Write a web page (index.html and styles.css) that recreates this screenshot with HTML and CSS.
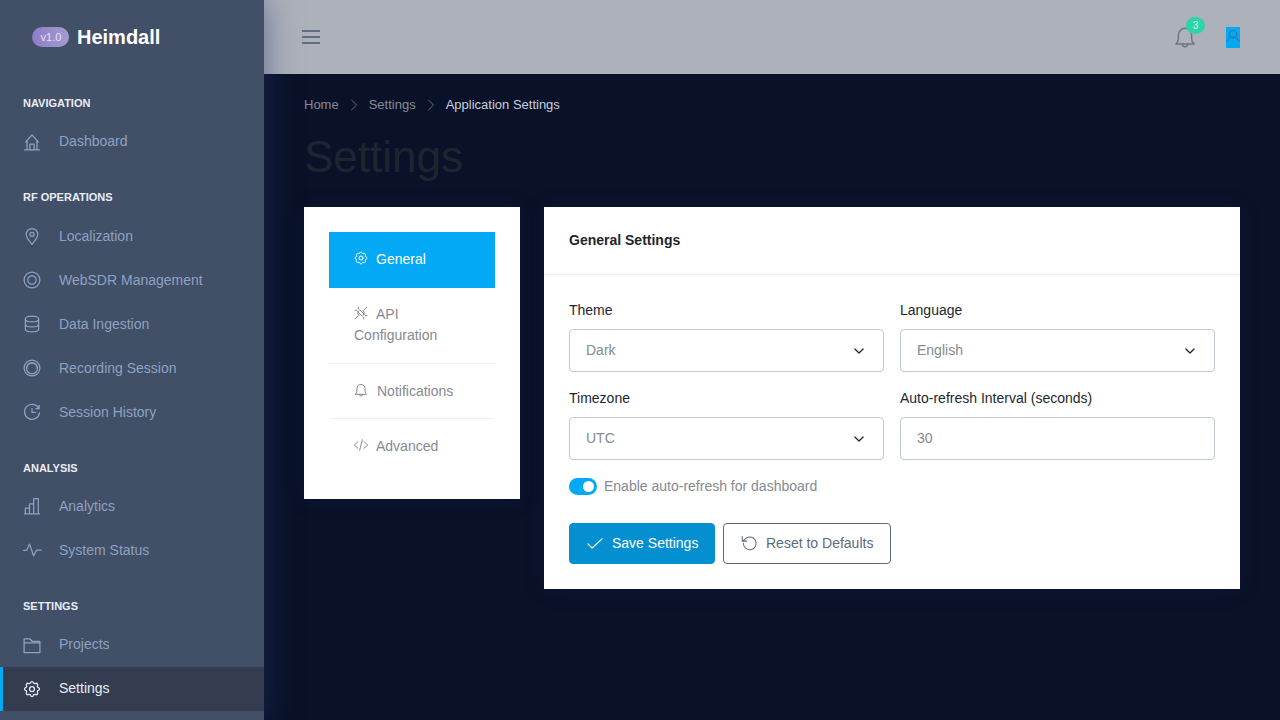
FILE: index.html
```html
<!DOCTYPE html>
<html>
<head>
	<meta charset="utf-8">
	<title>Heimdall - Settings</title>
	<link rel="stylesheet" href="styles.css">
</head>
<body>
	<svg class="defs" width="0" height="0">
		<symbol id="i-gear" viewBox="0 0 24 24"><path d="M10.325 4.317c.426-1.756 2.924-1.756 3.35 0a1.724 1.724 0 0 0 2.573 1.066c1.543-.94 3.31.826 2.37 2.37a1.724 1.724 0 0 0 1.065 2.572c1.756.426 1.756 2.924 0 3.35a1.724 1.724 0 0 0-1.066 2.573c.94 1.543-.826 3.31-2.37 2.37a1.724 1.724 0 0 0-2.572 1.065c-.426 1.756-2.924 1.756-3.35 0a1.724 1.724 0 0 0-2.573-1.066c-1.543.94-3.31-.826-2.37-2.37a1.724 1.724 0 0 0-1.065-2.572c-1.756-.426-1.756-2.924 0-3.35a1.724 1.724 0 0 0 1.066-2.573c-.94-1.543.826-3.31 2.37-2.37c1 .608 2.296.07 2.572-1.065z"/><circle cx="12" cy="12" r="3"/></symbol>
		<symbol id="i-bell" viewBox="0 0 24 24"><path d="M3.5 18.5h17c-1.6-1.3-2.4-3-2.4-5V10a6.1 6.1 0 0 0-12.200 0v3.500c0 2-.8 3.700-2.400 5z"/><path d="M9.500 18.500a2.500 2.500 0 0 0 5 0"/></symbol>
		<symbol id="i-chevron" viewBox="0 0 24 24"><path d="M5 8.500l7 7 7-7"/></symbol>
	</svg>

	<aside class="sidebar">
		<div class="brand">
			<span class="version">v1.0</span>
			<span class="brand-name">Heimdall</span>
		</div>
		<nav>
			<div class="caption">Navigation</div>
			<a class="nav-item"><svg class="nav-icon" viewBox="0 0 24 24"><path d="M3 21.500h18M4.500 12 12 3.500l7.500 8.500M6 10.500V21.500M18 10.500V21.500M9.500 21.500V14.500h5v7"/></svg>Dashboard</a>

			<div class="caption">RF Operations</div>
			<a class="nav-item"><svg class="nav-icon" viewBox="0 0 24 24"><path d="M12 22c-4-4.500-7-8-7-12a7 7 0 0 1 14 0c0 4-3 7.500-7 12z"/><circle cx="12" cy="10" r="2.500"/></svg>Localization</a>
			<a class="nav-item"><svg class="nav-icon" viewBox="0 0 24 24"><circle cx="12" cy="12" r="9.500"/><circle cx="12" cy="12" r="5"/></svg>WebSDR Management</a>
			<a class="nav-item"><svg class="nav-icon" viewBox="0 0 24 24"><ellipse cx="12" cy="6" rx="8" ry="3.500"/><path d="M4 6v12c0 2 3.600 3.500 8 3.500s8-1.500 8-3.500V6M4 12c0 2 3.600 3.500 8 3.500s8-1.500 8-3.500"/></svg>Data Ingestion</a>
			<a class="nav-item"><svg class="nav-icon" viewBox="0 0 24 24"><circle cx="12" cy="12" r="9.500"/><circle cx="12" cy="12.500" r="6.500"/><path d="M5.500 12a6.500 6.500 0 0 1 13 0"/></svg>Recording Session</a>
			<a class="nav-item"><svg class="nav-icon" viewBox="0 0 24 24"><path d="M20 7.500A9 9 0 1 0 21 13M12 7.500V12.500H16M20.500 4v4h-4"/></svg>Session History</a>

			<div class="caption">Analysis</div>
			<a class="nav-item"><svg class="nav-icon" viewBox="0 0 24 24"><path d="M3 21.500h18M4 21.500v-7h5v7M9 21.500V9.500h5v12M14 21.500V3h5.500v18.500"/></svg>Analytics</a>
			<a class="nav-item"><svg class="nav-icon" viewBox="0 0 24 24"><path d="M2 12.500h3.500L9 5l5 14 3.500-7H23"/></svg>System Status</a>

			<div class="caption">Settings</div>
			<a class="nav-item"><svg class="nav-icon" viewBox="0 0 24 24"><path d="M2.500 21V4.500h7l2.500 3h9.500V21zM2.500 9.500h19"/></svg>Projects</a>
			<a class="nav-item active"><svg class="nav-icon"><use href="#i-gear"/></svg>Settings</a>
		</nav>
	</aside>

	<div class="content">
		<header class="topbar">
			<svg class="menu-icon" viewBox="0 0 18 14"><path d="M0 1h18M0 7h18M0 13h18"/></svg>
			<div class="topbar-right">
				<div class="bell">
					<svg class="bell-icon"><use href="#i-bell"/></svg>
					<span class="badge">3</span>
				</div>
				<div class="avatar">
					<svg viewBox="0 0 14 21"><circle cx="7" cy="7.300" r="3.700"/><path d="M1 14c1.200-2.600 3.400-4 6-4s4.800 1.400 6 4"/></svg>
				</div>
			</div>
		</header>

		<main class="page">
			<ul class="breadcrumb">
				<li>Home</li>
				<li class="sep"><svg viewBox="0 0 8 12"><path d="M1.500 1l5 5-5 5"/></svg></li>
				<li>Settings</li>
				<li class="sep"><svg viewBox="0 0 8 12"><path d="M1.500 1l5 5-5 5"/></svg></li>
				<li class="current">Application Settings</li>
			</ul>
			<h1>Settings</h1>

			<div class="columns">
				<div class="card side-card">
					<a class="tab active"><svg class="tab-icon"><use href="#i-gear"/></svg>General</a>
					<a class="tab tab-wrapped"><svg class="tab-icon" viewBox="0 0 24 24"><path d="M3 21l5-5M21 3l-5 5M7 10l7 7M10 7l7 7M8.500 15.500a5 5 0 0 1 0-7M15.500 8.500a5 5 0 0 1 0 7M3 8h2.500M8 3v2.500M16 21v-2.500M21 16h-2.500"/></svg>API Configuration</a>
					<a class="tab"><svg class="tab-icon tab-icon-wide"><use href="#i-bell"/></svg>Notifications</a>
					<a class="tab"><svg class="tab-icon" viewBox="0 0 24 24"><path d="M7.500 7 2 12l5.500 5M16.500 7l5.500 5-5.500 5M14 4l-4 16"/></svg>Advanced</a>
				</div>

				<div class="card main-card">
					<div class="card-header">General Settings</div>
					<div class="card-body">
						<div class="form-grid">
							<div class="field">
								<label>Theme</label>
								<div class="select-wrap">
									<select class="control"><option>Dark</option></select>
									<svg class="chevron"><use href="#i-chevron"/></svg>
								</div>
							</div>
							<div class="field">
								<label>Language</label>
								<div class="select-wrap">
									<select class="control"><option>English</option></select>
									<svg class="chevron"><use href="#i-chevron"/></svg>
								</div>
							</div>
							<div class="field">
								<label>Timezone</label>
								<div class="select-wrap">
									<select class="control"><option>UTC</option></select>
									<svg class="chevron"><use href="#i-chevron"/></svg>
								</div>
							</div>
							<div class="field">
								<label>Auto-refresh Interval (seconds)</label>
								<input class="control" type="text" value="30">
							</div>
						</div>

						<div class="switch-row">
							<span class="switch"></span>
							<span>Enable auto-refresh for dashboard</span>
						</div>

						<div class="actions">
							<button class="btn btn-primary"><svg viewBox="0 0 24 24"><path d="M3.500 13l5 5L20.500 7"/></svg>Save Settings</button>
							<button class="btn btn-outline"><svg viewBox="0 0 24 24"><path d="M4.500 12.500A8.500 8.500 0 1 0 7 6.500L3.500 9.500M3 3.500v6h6"/></svg>Reset to Defaults</button>
						</div>
					</div>
				</div>
			</div>
		</main>
	</div>
</body>
</html>
```

FILE: styles.css
```css
* {
	box-sizing: border-box;
}

body, html {
	height: 100%;
}

body {
	margin: 0;
	padding: 0;
	display: flex;
	overflow: hidden;
	background: #0a1229;
	font-family: "Liberation Sans", Arial, sans-serif;
	font-size: 14px;
	line-height: 21px;
	color: #1d2630;
}

.defs {
	position: absolute;
}

svg {
	fill: none;
	stroke: currentColor;
	stroke-linecap: round;
	stroke-linejoin: round;
}

/* sidebar */
.sidebar {
	position: relative;
	z-index: 2;
	flex: 0 0 264px;
	height: 100vh;
	overflow: hidden;
	background: #414f67;
	box-shadow: 0 0 30px rgba(34, 56, 110, .55);
}

.brand {
	height: 74px;
	padding-left: 32px;
	display: flex;
	align-items: center;
	gap: 8px;
}

.version {
	width: 37px;
	height: 20px;
	padding-left: 1px;
	border-radius: 10px;
	background: linear-gradient(90deg, #8e7cc9, #a59cd1);
	color: #e6e4f2;
	font-size: 11px;
	line-height: 20px;
	text-align: center;
}

.brand-name {
	color: #fff;
	font-size: 20px;
	font-weight: bold;
}

.caption {
	padding: 25.6px 23px 8.23px;
	color: #e8edf5;
	font-size: 11px;
	font-weight: bold;
	line-height: 16.5px;
	text-transform: uppercase;
}

.caption:first-child {
	padding-top: 21.05px;
}

.nav-item {
	height: 44px;
	padding-left: 22px;
	display: flex;
	align-items: center;
	gap: 17px;
	color: #8ea2c2;
}

.nav-icon {
	width: 20px;
	height: 20px;
	flex: none;
	stroke-width: 1.5;
}

.nav-item.active {
	background: #343d50;
	border-left: 3px solid #04a9f5;
	padding-left: 19px;
	color: #e8edf5;
}

/* top bar */
.content {
	flex: 1;
	min-width: 0;
}

.topbar {
	height: 74px;
	padding: 0 40px 0 38px;
	display: flex;
	align-items: center;
	justify-content: space-between;
	background: #adb1ba;
}

.menu-icon {
	width: 18px;
	height: 14px;
	color: #5f7086;
	stroke-width: 2;
	stroke-linecap: butt;
}

.topbar-right {
	display: flex;
	align-items: center;
	gap: 31px;
}

.bell {
	position: relative;
	width: 20px;
	height: 22px;
}

.bell-icon {
	display: block;
	width: 26px;
	height: 26px;
	margin: -2px 0 0 -3px;
	color: #6b7684;
	stroke-width: 1.3;
}

.badge {
	position: absolute;
	top: -9px;
	left: 11px;
	width: 19px;
	height: 17px;
	border-radius: 50%;
	background: #2ad6a6;
	color: #e8fbf5;
	font-size: 10px;
	line-height: 17px;
	text-align: center;
}

.avatar {
	width: 14px;
	height: 21px;
	margin-top: 1px;
	background: #04a9f5;
	color: #3f6f94;
}

.avatar svg {
	display: block;
	width: 14px;
	height: 21px;
	stroke-width: 1;
}

/* page */
.page {
	padding: 21px 40px;
}

.breadcrumb {
	list-style: none;
	margin: 0;
	padding: 0;
	display: flex;
	align-items: center;
	gap: 11px;
	font-size: 13px;
	line-height: 20px;
	color: #868c96;
}

.breadcrumb .sep {
	display: flex;
	color: #5f6b7a;
}

.breadcrumb svg {
	width: 8px;
	height: 12px;
	stroke-width: 1;
}

.breadcrumb .current {
	color: #c8cfdb;
}

h1 {
	margin: 16px 0 0;
	font-size: 44px;
	font-weight: normal;
	line-height: 52px;
	color: #1d2630;
}

.columns {
	margin-top: 24px;
	display: flex;
	align-items: flex-start;
	gap: 24px;
}

.card {
	background: #fff;
	box-shadow: 0 1px 20px rgba(27, 46, 94, .15);
}

.side-card {
	flex: 0 0 216px;
	padding: 25px;
}

.tab {
	display: block;
	padding: 17px 25px 16px;
	border-bottom: 1px solid #eef0f2;
	color: #858a90;
}

.tab-wrapped {
	padding: 16px 25px 17px;
}

.tab:last-child {
	border-bottom: 0;
	padding-bottom: 17px;
}

.tab.active {
	background: #04a9f5;
	border-bottom: 0;
	padding-bottom: 18px;
	color: #fff;
}

.tab-icon {
	width: 16px;
	height: 16px;
	margin: 0 7px 0 -1px;
	stroke-width: 1.5;
	vertical-align: -2px;
}

.tab-icon-wide {
	margin-right: 8px;
}

.main-card {
	flex: 1;
	min-width: 0;
}

.card-header {
	height: 68px;
	padding: 23px 25px 0;
	border-bottom: 1px solid #eef0f2;
	font-weight: bold;
}

.card-body {
	padding: 25px;
}

.form-grid {
	display: grid;
	grid-template-columns: 1fr 1fr;
	gap: 16px;
}

.field label {
	display: block;
	margin-bottom: 8px;
	line-height: 21px;
}

.select-wrap {
	position: relative;
}

.control {
	display: block;
	width: 100%;
	height: 43px;
	padding: 0 16px 1px;
	appearance: none;
	background: #fff;
	border: 1px solid #bec8d0;
	border-radius: 4px;
	outline: 0;
	font-family: inherit;
	font-size: 14px;
	color: #858a90;
}

.chevron {
	position: absolute;
	top: 15px;
	right: 18px;
	width: 14px;
	height: 14px;
	color: #1d2630;
	stroke-width: 2.2;
	pointer-events: none;
}

.switch-row {
	margin-top: 16px;
	display: flex;
	align-items: center;
	gap: 7px;
	color: #858a90;
}

.switch {
	position: relative;
	width: 28px;
	height: 17px;
	border-radius: 9px;
	background: #04a9f5;
}

.switch:after {
	content: "";
	position: absolute;
	top: 3px;
	right: 3px;
	width: 11px;
	height: 11px;
	border-radius: 50%;
	background: #fff;
}

.actions {
	margin-top: 26px;
	display: flex;
	gap: 8px;
}

.btn {
	height: 41px;
	display: flex;
	align-items: center;
	gap: 7px;
	border-radius: 4px;
	font-family: inherit;
	font-size: 14px;
}

.btn svg {
	width: 20px;
	height: 20px;
	stroke-width: 1.4;
}

.btn-primary {
	width: 146px;
	padding: 0 0 2px 15px;
	background: #038fd0;
	border: 1px solid #038fd0;
	color: #fff;
}

.btn-outline {
	width: 168px;
	padding: 0 0 2px 16px;
	gap: 8px;
	background: #fff;
	border: 1px solid #5b6b79;
	color: #5b6b79;
}

.btn-outline svg {
	width: 18px;
	height: 18px;
}
```
